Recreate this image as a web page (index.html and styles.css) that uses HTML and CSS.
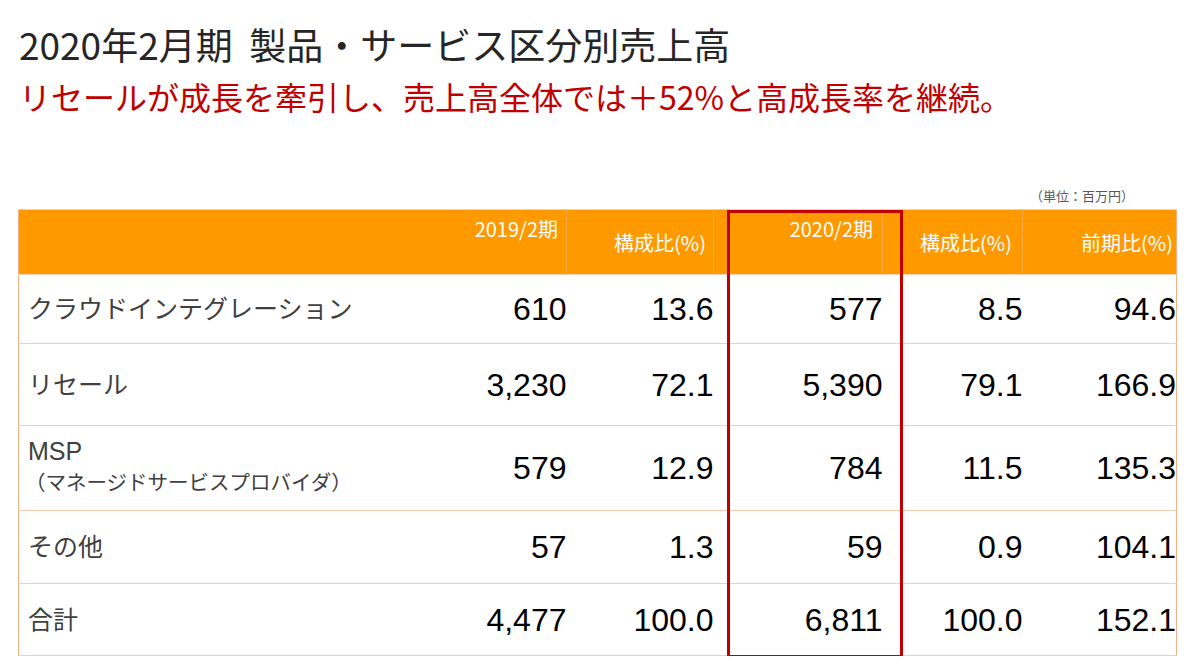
FILE: index.html
```html
<!DOCTYPE html>
<html lang="ja">
<head>
<meta charset="utf-8">
<title>製品・サービス区分別売上高</title>
<link rel="stylesheet" href="styles.css">
</head>
<body>
<div class="page">
  <h1 class="title">2020年2月期&nbsp;&nbsp;製品・サービス区分別売上高</h1>
  <p class="lead">リセールが成長を牽引し、売上高全体では＋52%と高成長率を継続。</p>
  <div class="unit">（単位：百万円）</div>
  <div class="table-wrap">
    <table class="sales">
      <colgroup>
        <col class="c-label"><col class="c-2019"><col class="c-r1"><col class="c-2020"><col class="c-r2"><col class="c-yoy">
      </colgroup>
      <thead>
        <tr>
          <th class="h-label"></th>
          <th class="h-period h-2019">2019/2期</th>
          <th class="h-ratio h-r1">構成比(%)</th>
          <th class="h-period h-2020">2020/2期</th>
          <th class="h-ratio h-r2">構成比(%)</th>
          <th class="h-ratio h-yoy">前期比(%)</th>
        </tr>
      </thead>
      <tbody>
        <tr class="r1">
          <td class="label">クラウドインテグレーション</td>
          <td class="num">610</td><td class="num">13.6</td><td class="num">577</td><td class="num">8.5</td><td class="num">94.6</td>
        </tr>
        <tr class="r2">
          <td class="label">リセール</td>
          <td class="num">3,230</td><td class="num">72.1</td><td class="num">5,390</td><td class="num">79.1</td><td class="num">166.9</td>
        </tr>
        <tr class="r3">
          <td class="label label-two"><span class="main">MSP</span><span class="sub">（マネージドサービスプロバイダ）</span></td>
          <td class="num">579</td><td class="num">12.9</td><td class="num">784</td><td class="num">11.5</td><td class="num">135.3</td>
        </tr>
        <tr class="r4">
          <td class="label">その他</td>
          <td class="num">57</td><td class="num">1.3</td><td class="num">59</td><td class="num">0.9</td><td class="num">104.1</td>
        </tr>
        <tr class="r5">
          <td class="label">合計</td>
          <td class="num">4,477</td><td class="num">100.0</td><td class="num">6,811</td><td class="num">100.0</td><td class="num">152.1</td>
        </tr>
      </tbody>
    </table>
    <div class="highlight"></div>
  </div>
</div>
</body>
</html>
```

FILE: styles.css
```css
* { box-sizing: border-box; }
html, body { margin: 0; padding: 0; background: #ffffff; }
body {
  font-family: "Noto Sans CJK JP", "Noto Sans", sans-serif;
  color: #262626;
}
.page {
  width: 1189px;
  padding: 24px 0 0 0;
}
.title {
  margin: 0 0 0 19px;
  font-size: 37px;
  line-height: 40px;
  font-weight: 400;
  color: #262626;
}
.lead {
  margin: 12px 0 0 19px;
  font-size: 32px;
  line-height: 40px;
  color: #c00000;
}
.unit {
  margin: 72px 0 0 0;
  padding-right: 55px;
  text-align: right;
  font-size: 13px;
  line-height: 16px;
  color: #595959;
}
.table-wrap {
  position: relative;
  margin: 5px 0 0 18px;
  width: 1158px;
}
.sales {
  width: 1158px;
  table-layout: fixed;
  border-collapse: collapse;
  border-left: 1px solid #f4b183;
  border-right: 1px solid #f4b183;
}
.c-label { width: 422px; }
.c-2019 { width: 126px; }
.c-r1 { width: 147px; }
.c-2020 { width: 169px; }
.c-r2 { width: 140px; }
.c-yoy { width: 154px; }

thead tr {
  height: 65px;
  background: #ff9900;
  border-top: 1px solid #f8cbad;
  border-bottom: 1px solid #fbd5b5;
}
th {
  padding: 0;
  font-weight: 400;
  font-size: 20px;
  color: #ffffff;
  text-align: right;
  border-left: 1px solid #ffad40;
}
th.h-label, th.h-2019 { border-left: none; }
th.h-period { vertical-align: top; padding-top: 4px; }
th.h-ratio { vertical-align: middle; padding-top: 0; }
th.h-2019 { padding-right: 8px; }
th.h-r1 { padding-right: 7px; }
th.h-2020 { padding-right: 9px; }
th.h-r2 { padding-right: 10px; }
th.h-yoy { padding-right: 3px; }

tbody tr { border-bottom: 1px solid #f8cbad; }
tr.r1 { height: 69px; }
tr.r2 { height: 82px; }
tr.r3 { height: 85px; }
tr.r4 { height: 73px; }
tr.r5 { height: 72px; }

td { padding: 0; vertical-align: middle; }
td.label {
  padding: 0 0 4px 9px;
  font-size: 25px;
  line-height: 30px;
  color: #404040;
}
td.label-two { padding-bottom: 2px; }
.label-two .main, .label-two .sub { display: block; }
.label-two .main {
  font-family: "Liberation Sans", Arial, sans-serif;
  font-size: 25px;
  line-height: 28px;
}
.label-two .sub { font-size: 20.5px; line-height: 32px; margin-left: -3px; }
td.num {
  text-align: right;
  padding-right: 0;
  font-family: "Liberation Sans", Arial, sans-serif;
  font-size: 32px;
  line-height: 36px;
  color: #000000;
}
.highlight {
  position: absolute;
  left: 709px;
  top: 1px;
  width: 176px;
  height: 448px;
  border: 3px solid #c00000;
  pointer-events: none;
}
```
